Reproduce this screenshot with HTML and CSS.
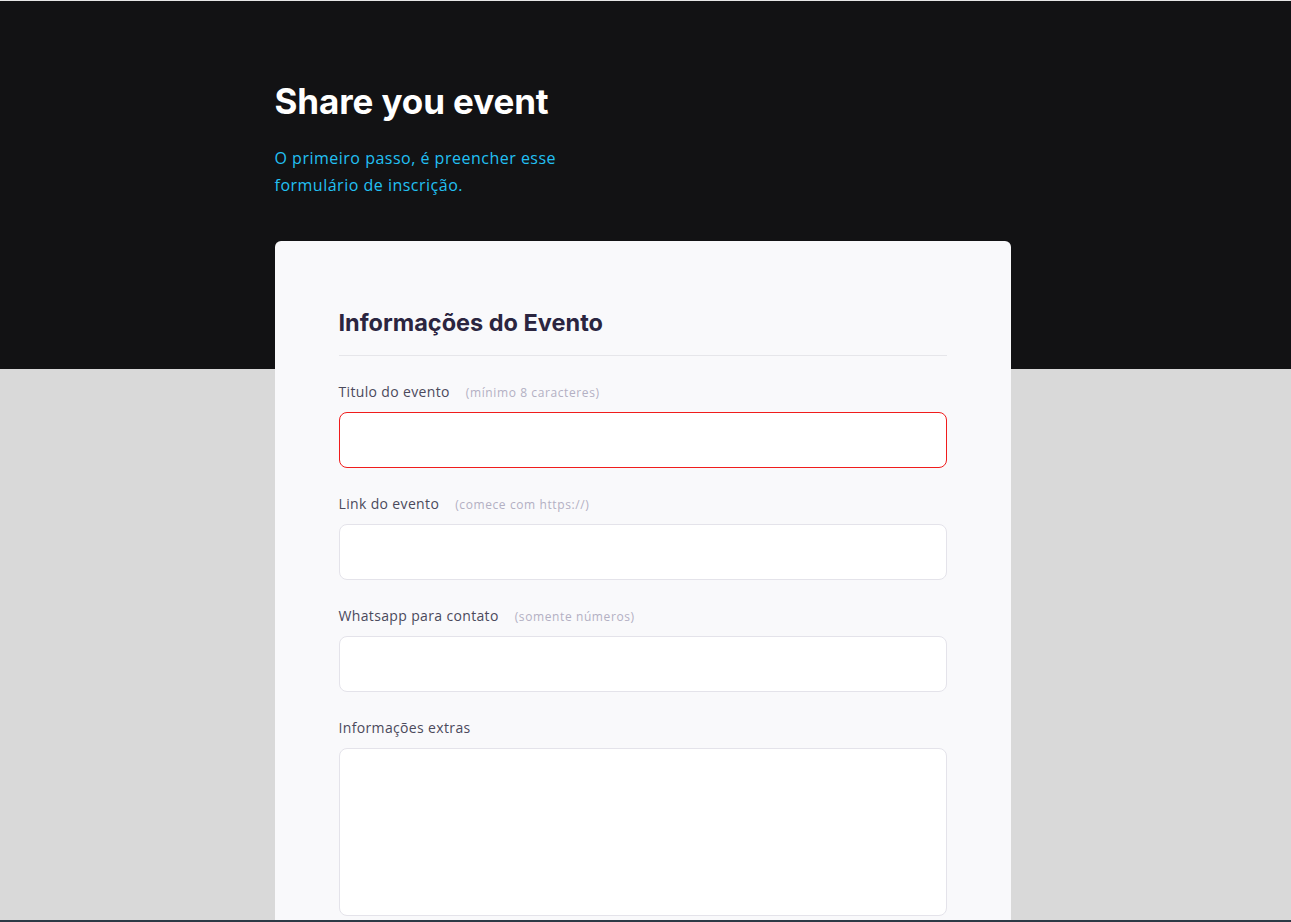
FILE: index.html
```html
<!DOCTYPE html>
<html lang="pt-BR">
<head>
<meta charset="utf-8">
<title>Share you event</title>
<link rel="stylesheet" href="styles.css">
</head>
<body>
<div class="page">
  <main class="wrap">
    <h1 class="title">Share you event</h1>
    <p class="subtitle">O primeiro passo, é preencher esse formulário de inscrição.</p>
    <section class="card">
      <h2 class="card-title">Informações do Evento</h2>
      <div class="field">
        <div class="label-row"><span class="label">Titulo do evento</span><span class="hint">(mínimo 8 caracteres)</span></div>
        <div class="input input-error"></div>
      </div>
      <div class="field">
        <div class="label-row"><span class="label">Link do evento</span><span class="hint">(comece com https://)</span></div>
        <div class="input"></div>
      </div>
      <div class="field">
        <div class="label-row"><span class="label">Whatsapp para contato</span><span class="hint">(somente números)</span></div>
        <div class="input"></div>
      </div>
      <div class="field">
        <div class="label-row"><span class="label">Informações extras</span></div>
        <div class="input textarea"></div>
      </div>
    </section>
  </main>
</div>
<div class="bottom-bar"></div>
</body>
</html>
```
FILE: styles.css
```css
html, body {
  margin: 0;
  padding: 0;
  height: 100%;
  overflow: hidden;
}
body {
  border-top: 1px solid #e6e6e6;
  font-family: "Open Sans", "DejaVu Sans", sans-serif;
}
.page {
  min-height: 100%;
  background: linear-gradient(#121214 0, #121214 368px, #d9d9d9 368px, #d9d9d9 100%);
}
.wrap {
  width: 736px;
  margin: 0 auto;
  padding-top: 78px;
  position: relative;
  left: -3px;
}
.title {
  margin: 0;
  font-family: Inter, "Liberation Sans", sans-serif;
  font-weight: 700;
  font-size: 35px;
  line-height: 44px;
  letter-spacing: -0.1px;
  color: #ffffff;
}
.subtitle {
  margin: 22px 0 0;
  width: 320px;
  font-size: 16px;
  line-height: 27px;
  letter-spacing: 0.5px;
  color: #22c0f3;
}
.card {
  margin-top: 42px;
  background: #f9f9fb;
  border-radius: 6px;
  padding: 66px 64px 40px;
}
.card-title {
  margin: 0;
  padding-bottom: 16px;
  border-bottom: 1px solid #e6e6ea;
  font-family: Inter, "Liberation Sans", sans-serif;
  font-weight: 700;
  font-size: 23.5px;
  line-height: 32px;
  color: #2b2540;
}
.field {
  margin-top: 26px;
}
.label-row {
  display: flex;
  align-items: baseline;
  gap: 16px;
  height: 20px;
  line-height: 20px;
}
.label {
  font-size: 14px;
  letter-spacing: 0.35px;
  color: #4b4a5c;
}
.hint {
  font-size: 12px;
  letter-spacing: 0.6px;
  color: #b3b0c3;
}
.input {
  margin-top: 10px;
  height: 54px;
  background: #ffffff;
  border: 1px solid #e4e3ea;
  border-radius: 8px;
}
.input-error {
  border-color: #f01c1c;
}
.textarea {
  height: 166px;
}
.bottom-bar {
  position: fixed;
  left: 0;
  right: 0;
  bottom: 0;
  height: 2px;
  background: #2c3a46;
}
```
